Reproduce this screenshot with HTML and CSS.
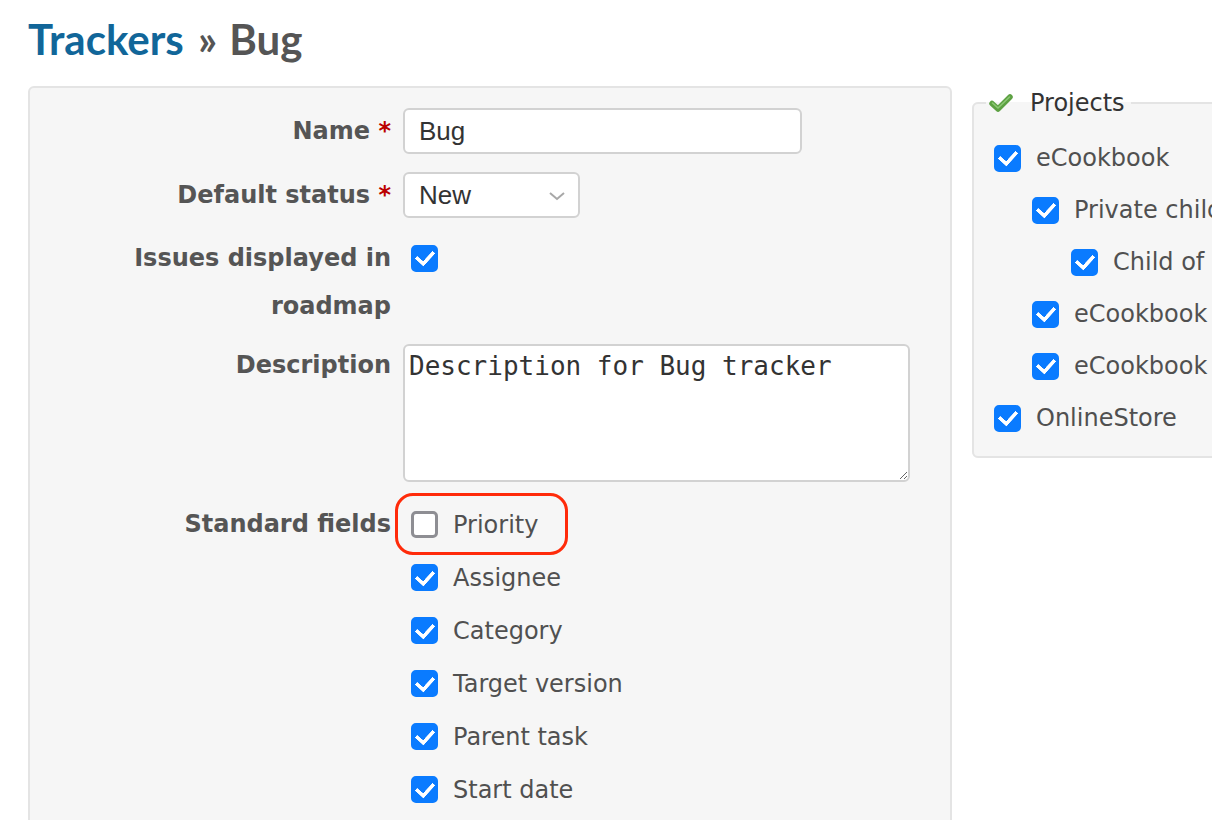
FILE: index.html
```html
<!DOCTYPE html>
<html lang="en">

<head>
    <meta charset="UTF-8">
    <meta name="viewport" content="width=device-width, initial-scale=1.0">
    <title>Trackers » Bug</title>
    <link rel="stylesheet" href="styles.css">
</head>

<body>
    <div class="content">
        <h2><a href="#">Trackers</a> <span class="sep">&raquo;</span> Bug</h2>

        <div class="split">
            <div class="box tabular">
                <div class="row">
                    <label for="tracker_name">Name <span class="required">*</span></label>
                    <div class="field">
                        <input type="text" id="tracker_name" class="text-input" value="Bug">
                    </div>
                </div>
                <div class="row">
                    <label for="tracker_status">Default status <span class="required">*</span></label>
                    <div class="field">
                        <div class="select-wrap">
                            <select id="tracker_status">
                                <option>New</option>
                                <option>In Progress</option>
                                <option>Resolved</option>
                            </select>
                            <svg class="chevron" width="18" height="10" viewBox="0 0 18 10">
                                <path d="M2 2 L9 8 L16 2" fill="none" stroke="#a8a8a8" stroke-width="2" />
                            </svg>
                        </div>
                    </div>
                </div>
                <div class="row row-roadmap">
                    <label for="tracker_roadmap">Issues displayed in roadmap</label>
                    <div class="field">
                        <input type="checkbox" id="tracker_roadmap" class="check" checked>
                    </div>
                </div>
                <div class="row row-description">
                    <label for="tracker_description">Description</label>
                    <div class="field">
                        <textarea id="tracker_description">Description for Bug tracker</textarea>
                    </div>
                </div>
                <div class="row row-fields">
                    <label>Standard fields</label>
                    <div class="field">
                        <ul class="check-list">
                            <li class="marked"><input type="checkbox" class="check"> Priority</li>
                            <li><input type="checkbox" class="check" checked> Assignee</li>
                            <li><input type="checkbox" class="check" checked> Category</li>
                            <li><input type="checkbox" class="check" checked> Target version</li>
                            <li><input type="checkbox" class="check" checked> Parent task</li>
                            <li><input type="checkbox" class="check" checked> Start date</li>
                            <li><input type="checkbox" class="check" checked> Due date</li>
                        </ul>
                    </div>
                </div>
            </div>

            <fieldset class="box projects">
                <legend>
                    <svg class="toggle" width="24" height="20" viewBox="0 0 24 20">
                        <path d="M3 10.5 L9 16 L21 4" fill="none" stroke="#5da143" stroke-width="5.5" stroke-linecap="round" stroke-linejoin="round" />
                        <path d="M3.5 10 L9 15 L20.5 4" fill="none" stroke="#8cc874" stroke-width="1.6" stroke-linecap="round" stroke-linejoin="round" />
                    </svg>
                    Projects
                </legend>
                <ul class="project-tree">
                    <li><input type="checkbox" class="check" checked> eCookbook</li>
                    <li class="lvl-1"><input type="checkbox" class="check" checked> Private child of eCookbook</li>
                    <li class="lvl-2"><input type="checkbox" class="check" checked> Child of private child</li>
                    <li class="lvl-1"><input type="checkbox" class="check" checked> eCookbook Subproject 1</li>
                    <li class="lvl-1"><input type="checkbox" class="check" checked> eCookbook Subproject 2</li>
                    <li><input type="checkbox" class="check" checked> OnlineStore</li>
                </ul>
            </fieldset>
        </div>
    </div>
</body>

</html>
```

FILE: styles.css
```css
* {
    margin: 0;
    padding: 0;
    box-sizing: border-box;
}

html,
body {
    overflow: hidden;
}

body {
    font-family: "DejaVu Sans", Verdana, sans-serif;
    font-size: 24px;
    color: #555;
    background: #fff;
}

.content {
    padding: 14px 0 0 28px;
}

h2 {
    font-family: Lato, "Open Sans", sans-serif;
    font-size: 42px;
    font-weight: 700;
    line-height: 50px;
    color: #555;
    margin-bottom: 22px;
}

h2 a {
    color: #169;
    text-decoration: none;
}

h2 .sep {
    margin: 0 2px 0 4px;
}

.split {
    display: flex;
    align-items: flex-start;
    gap: 20px;
}

.box {
    background: #f6f6f6;
    border: 2px solid #e4e4e4;
    border-radius: 6px;
}

/* left form */
.tabular {
    width: 924px;
    flex: 0 0 924px;
    padding: 20px 0 40px;
    display: flex;
    flex-direction: column;
    gap: 16px;
}

.row {
    display: flex;
    align-items: flex-start;
    gap: 12px;
}

.row:first-child {
    margin-bottom: 2px;
}

.row > label {
    flex: 0 0 361px;
    text-align: right;
    font-weight: bold;
    line-height: 46px;
    color: #555;
}

.required {
    color: #b00;
}

.row-roadmap > label {
    line-height: 48px;
}

.row-roadmap .field {
    height: 48px;
    display: flex;
    align-items: center;
}

.row-description {
    margin-top: -2px;
}

.row-description > label {
    line-height: 42px;
}

.row-fields > label {
    line-height: 53px;
}

.text-input,
select,
textarea {
    display: block;
    border: 2px solid #d2d2d2;
    border-radius: 6px;
    background: #fff;
    color: #333;
    outline: none;
}

.text-input {
    width: 399px;
    height: 46px;
    padding: 0 14px;
    font-family: "Liberation Sans", Arial, sans-serif;
    font-size: 26px;
}

.select-wrap {
    position: relative;
    width: 177px;
}

select {
    appearance: none;
    width: 177px;
    height: 46px;
    padding: 0 14px;
    font-family: "Liberation Sans", Arial, sans-serif;
    font-size: 26px;
}

.chevron {
    position: absolute;
    right: 14px;
    top: 19px;
    pointer-events: none;
}

textarea {
    width: 507px;
    height: 138px;
    padding: 0 4px;
    font-family: "DejaVu Sans Mono", monospace;
    font-size: 26px;
    line-height: 40px;
    resize: both;
}

/* checkboxes */
.check {
    appearance: none;
    width: 27px;
    height: 27px;
    flex: 0 0 27px;
    margin: 0 15px 0 8px;
    border: 3px solid #8e8e93;
    border-radius: 5px;
    background: #fff;
    display: inline-grid;
    place-content: center;
}

.check:checked {
    background: #0a7bff;
    border-color: #0a7bff;
}

.check:checked::before {
    content: "";
    width: 8px;
    height: 14px;
    border-right: 4px solid #fff;
    border-bottom: 4px solid #fff;
    border-radius: 1px;
    transform: translate(0, -2px) rotate(42deg);
}

.check-list,
.project-tree {
    list-style: none;
}

.check-list li,
.project-tree li {
    display: flex;
    align-items: center;
    white-space: nowrap;
    color: #505050;
}

.check-list li {
    height: 53px;
}

.check-list li.marked {
    position: relative;
}

/* red highlight around the unchecked field */
.check-list li.marked::after {
    content: "";
    position: absolute;
    box-sizing: border-box;
    left: -8px;
    top: -5px;
    width: 173px;
    height: 62px;
    border: 3px solid #ff2b0a;
    border-radius: 18px;
}

/* projects fieldset */
.projects {
    width: 320px;
    flex: 0 0 320px;
    padding: 0 0 12px 12px;
    margin-top: 0;
}

.projects legend {
    display: flex;
    align-items: center;
    gap: 17px;
    padding: 0 6px 0 3px;
    line-height: 34px;
    color: #333;
}

.toggle {
    display: block;
}

.project-tree {
    padding-top: 12px;
}

.project-tree li {
    height: 52px;
}

.project-tree li.lvl-1 {
    padding-left: 38px;
}

.project-tree li.lvl-2 {
    padding-left: 77px;
}
```
